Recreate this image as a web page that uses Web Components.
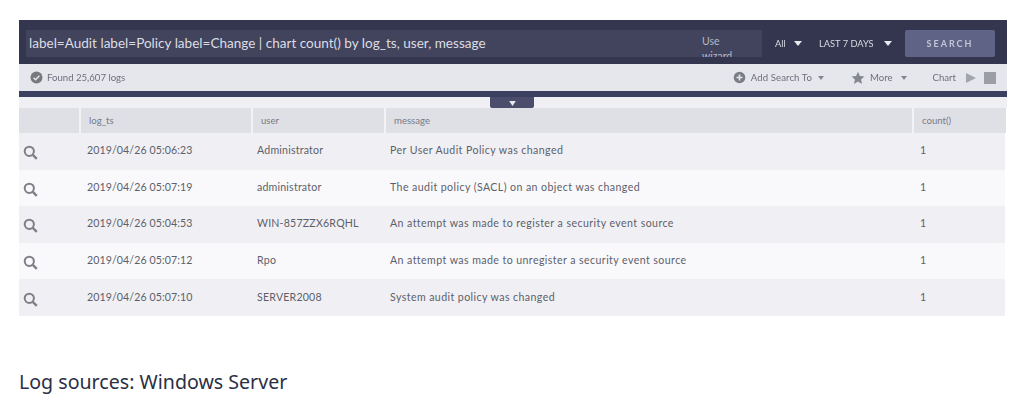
<!DOCTYPE html>
<html>
<head>
<meta charset="utf-8">
<style>
  html, body { margin: 0; background: #fff; }
  body { width: 1024px; height: 404px; overflow: hidden; font-family: "Lato", "Liberation Sans", sans-serif; }
</style>
</head>
<body>
<log-page>
  <search-bar slot="panel" query="label=Audit label=Policy label=Change | chart count() by log_ts, user, message"></search-bar>
  <tool-bar slot="panel" found="Found 25,607 logs"></tool-bar>
  <result-table slot="panel">
    <result-row time="2019/04/26 05:06:23" user="Administrator" message="Per User Audit Policy was changed" count="1"></result-row>
    <result-row time="2019/04/26 05:07:19" user="administrator" message="The audit policy (SACL) on an object was changed" count="1"></result-row>
    <result-row time="2019/04/26 05:04:53" user="WIN-857ZZX6RQHL" message="An attempt was made to register a security event source" count="1"></result-row>
    <result-row time="2019/04/26 05:07:12" user="Rpo" message="An attempt was made to unregister a security event source" count="1"></result-row>
    <result-row time="2019/04/26 05:07:10" user="SERVER2008" message="System audit policy was changed" count="1"></result-row>
  </result-table>
  <span slot="caption">Log sources: Windows Server</span>
</log-page>

<script>
class LogPage extends HTMLElement {
  constructor() {
    super()
    this.attachShadow({ mode: 'open' }).innerHTML = `
      <style>
        :host { display: block; padding: 20px 17px 0 19px; }
        .panel { display: flex; flex-direction: column; filter: blur(.55px); }
        .caption {
          margin-top: 53px;
          font: 19.6px/26px "Noto Sans", "Open Sans", sans-serif;
          color: #2b2f45;
        }
      </style>
      <div class="panel"><slot name="panel"></slot></div>
      <div class="caption"><slot name="caption"></slot></div>
    `
  }
}

class SearchBar extends HTMLElement {
  constructor() {
    super()
    this.attachShadow({ mode: 'open' })
  }
  connectedCallback() {
    this.shadowRoot.innerHTML = `
      <style>
        :host { display: flex; align-items: flex-start; height: 44px; box-sizing: border-box; background: #34364f; padding: 10px 12px 0 7px; color: #d5d6df; }
        div { flex: none; }
        .query { width: 670px; height: 27px; box-sizing: border-box; padding-left: 3px; background: #41445c; font-size: 13.55px; line-height: 27px; white-space: nowrap; color: #dcdde4; }
        .wizard { width: 66px; height: 27px; padding: 4px 0 0 6px; box-sizing: border-box; background: #41445c; font-size: 10.5px; line-height: 15px; overflow: hidden; color: #b6b8c6; }
        .sel { display: flex; align-items: center; height: 27px; font-size: 9.3px; color: #d8d9e1; }
        .all { margin-left: 13px; width: 44px; }
        .all i { margin-left: 8px; }
        .days i { margin-left: 10px; }
        .sel i { width: 0; height: 0; border: 4.5px solid transparent; border-top: 5px solid #e9eaef; border-bottom: 0; }
        .btn { margin-left: auto; width: 90px; height: 27px; background: #5f6385; border-radius: 2px; text-align: center; line-height: 27px; font-size: 9px; font-weight: 700; letter-spacing: 2px; color: #c4c6d4; }
      </style>
      <div class="query">${this.getAttribute('query')}</div>
      <div class="wizard">Use<br>wizard</div>
      <div class="sel all">All<i></i></div>
      <div class="sel days">LAST 7 DAYS<i></i></div>
      <div class="btn">SEARCH</div>
    `
  }
}

class ToolBar extends HTMLElement {
  constructor() {
    super()
    this.attachShadow({ mode: 'open' })
  }
  connectedCallback() {
    this.shadowRoot.innerHTML = `
      <style>
        :host { display: block; }
        .row { display: flex; align-items: center; height: 27px; background: #e6e7ec; padding: 0 11px 0 11px; font-size: 9.6px; color: #6d6f7c; }
        .found { margin-left: 4px; }
        .right { margin-left: auto; display: flex; align-items: center; }
        .caret { width: 0; height: 0; border: 3px solid transparent; border-top: 4px solid #85878f; border-bottom: 0; }
        svg { display: block; }
        .line { height: 6px; background: #3c4060; }
        .gap { position: relative; height: 11px; background: #f0f0f4; }
        .tab { position: absolute; left: 471px; top: 0; width: 44px; height: 11px; background: #4a4e6c; border-radius: 0 0 2px 2px; display: flex; justify-content: center; padding-top: 4px; box-sizing: border-box; }
      </style>
      <div class="row">
        <svg width="13" height="13" viewBox="0 0 13 13"><circle cx="6.5" cy="6.5" r="6" fill="#77797f"/><path d="M3.6 6.7l2 2 3.8-4" fill="none" stroke="#e6e7ec" stroke-width="1.5"/></svg>
        <span class="found">${this.getAttribute('found')}</span>
        <div class="right">
          <svg width="13" height="13" viewBox="0 0 13 13"><circle cx="6.5" cy="6.5" r="5.8" fill="#7b7d85"/><path d="M6.5 3.5v6M3.5 6.5h6" stroke="#e6e7ec" stroke-width="1.6"/></svg>
          <span style="margin-left:5px;letter-spacing:.1px">Add Search To</span>
          <span class="caret" style="margin-left:6px"></span>
          <svg style="margin-left:27px" width="14" height="14" viewBox="0 0 14 14"><path d="M7 .8l1.9 4.1 4.5.5-3.3 3 .9 4.5L7 10.6l-4 2.3.9-4.5-3.3-3 4.5-.5z" fill="#85878f"/></svg>
          <span style="margin-left:5px">More</span>
          <span class="caret" style="margin-left:8px"></span>
          <span style="margin-left:26px">Chart</span>
          <svg style="margin-left:9px" width="12" height="12" viewBox="0 0 12 12"><path d="M1 1l10 5-10 5z" fill="#a3a5ac"/></svg>
          <svg style="margin-left:7px" width="12" height="12" viewBox="0 0 12 12"><rect width="12" height="12" fill="#9c9ea6"/></svg>
        </div>
      </div>
      <div class="line"></div>
      <div class="gap"><div class="tab"><svg width="7" height="5" viewBox="0 0 8 6"><path d="M0 0h8L4 6z" fill="#e8e9ee"/></svg></div></div>
    `
  }
}

class ResultTable extends HTMLElement {
  constructor() {
    super()
    this.attachShadow({ mode: 'open' }).innerHTML = `
      <style>
        :host { display: block; font-size: 10.6px; color: #5d5f6b; }
        .head { display: grid; grid-template-columns: 60px 170px 131px 526px 1fr; gap: 2px; height: 25px; background: #f3f3f6; width: 987px; }
        .head div { background: #dfe0e5; line-height: 25px; padding-left: 8px; font-size: 9.6px; color: #787a86; }
        .body { width: 986px; }
      </style>
      <div class="head"><div></div><div>log_ts</div><div>user</div><div>message</div><div>count()</div></div>
      <div class="body"><slot></slot></div>
    `
  }
}

class ResultRow extends HTMLElement {
  constructor() {
    super()
    this.attachShadow({ mode: 'open' })
  }
  connectedCallback() {
    this.shadowRoot.innerHTML = `
      <style>
        :host { display: grid; grid-template-columns: 68px 170px 133px 531px 1fr; align-items: center; height: 36.6px; background: #f0f0f4; letter-spacing: .1px; }
        :host(:nth-child(even)) { background: #f9f9fb; }
        svg { display: block; margin: 3px 0 0 4px; }
        div { white-space: nowrap; margin-top: -2px; }
        .user { letter-spacing: .2px; }
        .msg { letter-spacing: .42px; }
        .count { margin-left: -1px; }
      </style>
      <svg width="15" height="15" viewBox="0 0 15 15"><circle cx="6.3" cy="6.3" r="4.6" fill="none" stroke="#7e8088" stroke-width="2"/><path d="M9.8 9.8l4 4" stroke="#7e8088" stroke-width="2.4"/></svg>
      <div>${this.getAttribute('time')}</div>
      <div class="user">${this.getAttribute('user')}</div>
      <div class="msg">${this.getAttribute('message')}</div>
      <div class="count">${this.getAttribute('count')}</div>
    `
  }
}

window.customElements.define('log-page', LogPage)
window.customElements.define('search-bar', SearchBar)
window.customElements.define('tool-bar', ToolBar)
window.customElements.define('result-table', ResultTable)
window.customElements.define('result-row', ResultRow)
</script>
</body>
</html>
